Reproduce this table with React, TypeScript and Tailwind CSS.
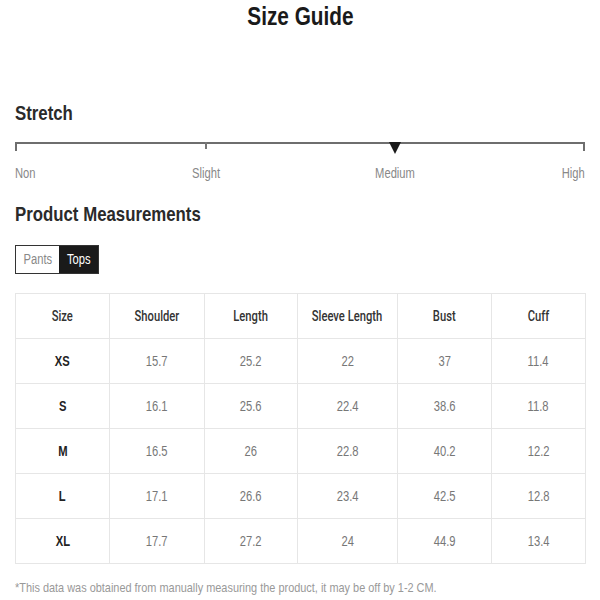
const headers = ['Size', 'Shoulder', 'Length', 'Sleeve Length', 'Bust', 'Cuff'];

const rows = [
  ['XS', '15.7', '25.2', '22', '37', '11.4'],
  ['S', '16.1', '25.6', '22.4', '38.6', '11.8'],
  ['M', '16.5', '26', '22.8', '40.2', '12.2'],
  ['L', '17.1', '26.6', '23.4', '42.5', '12.8'],
  ['XL', '17.7', '27.2', '24', '44.9', '13.4'],
];

const colWidths = ['w-[94px]', 'w-[95px]', 'w-[93px]', 'w-[100px]', 'w-[94px]', 'w-[94px]'];

// the reference type is a tall, narrow grotesque; squeeze Liberation Sans to match
const Narrow = ({ children, origin = 'origin-center' }: { children: React.ReactNode; origin?: string }) => (
  <span className={`inline-block whitespace-nowrap scale-x-[0.8] ${origin}`}>{children}</span>
);

const App = () => {
  return (
    <div className="w-[600px] h-[600px] bg-white overflow-hidden font-['Liberation_Sans',Arial,sans-serif]">
      <div className="px-[15px]">
        <h1 className="pt-[3px] text-center text-[26px] leading-[26px] font-bold text-[#1a1a1a]">
          <Narrow>Size Guide</Narrow>
        </h1>

        <h2 className="mt-[73px] text-[21px] leading-[22px] font-bold text-[#2a2a2a]">
          <Narrow origin="origin-left">Stretch</Narrow>
        </h2>

        {/* stretch scale */}
        <div className="relative mt-[18px] h-[12px]">
          <div className="h-[2px] bg-[#6e6e6e]" />
          <div className="absolute left-0 top-0 w-[2px] h-[9px] bg-[#6e6e6e]" />
          <div className="absolute left-[190px] top-0 w-[2px] h-[7px] bg-[#777]" />
          <div className="absolute right-0 top-0 w-[2px] h-[9px] bg-[#6e6e6e]" />
          <svg className="absolute left-[374px] top-0" width="12" height="12" viewBox="0 0 12 12">
            <polygon points="0,0 12,0 6,12" fill="#1a1a1a" />
          </svg>
        </div>
        <div className="relative mt-[11px] h-[17px] text-[14px] leading-[17px] text-[#888]">
          <span className="absolute left-0"><Narrow origin="origin-left">Non</Narrow></span>
          <span className="absolute left-[191px] -translate-x-1/2"><Narrow>Slight</Narrow></span>
          <span className="absolute left-[380px] -translate-x-1/2"><Narrow>Medium</Narrow></span>
          <span className="absolute right-0"><Narrow origin="origin-right">High</Narrow></span>
        </div>

        <h2 className="mt-[20px] text-[21px] leading-[24px] font-bold text-[#2a2a2a]">
          <Narrow origin="origin-left">Product Measurements</Narrow>
        </h2>

        <div className="mt-[19px] flex w-fit border border-[#333] text-[14px] leading-[27px]">
          <div className="w-[43px] text-center text-[#888] bg-white"><Narrow>Pants</Narrow></div>
          <div className="w-[39px] text-center text-white bg-[#1a1a1a]"><Narrow>Tops</Narrow></div>
        </div>

        <table className="mt-[19px] w-[570px] border-collapse table-fixed text-[14px]">
          <thead>
            <tr>
              {headers.map((h, i) => (
                <th
                  key={h}
                  className={`${colWidths[i]} h-[45px] border border-[#e6e6e6] text-center font-['Roboto',sans-serif] font-medium text-[#333]`}
                >
                  <Narrow>{h}</Narrow>
                </th>
              ))}
            </tr>
          </thead>
          <tbody>
            {rows.map((row) => (
              <tr key={row[0]}>
                {row.map((cell, i) => (
                  <td
                    key={i}
                    className={`h-[45px] border border-[#e6e6e6] text-center ${
                      i === 0 ? 'font-bold text-[#222]' : 'text-[#777]'
                    }`}
                  >
                    <Narrow>{cell}</Narrow>
                  </td>
                ))}
              </tr>
            ))}
          </tbody>
        </table>

        <p className="mt-[16px] text-[13px] leading-[15px] text-[#999]">
          <span className="inline-block whitespace-nowrap scale-x-[0.84] origin-left">
            *This data was obtained from manually measuring the product, it may be off by 1-2 CM.
          </span>
        </p>
      </div>
    </div>
  );
};

export default App;
